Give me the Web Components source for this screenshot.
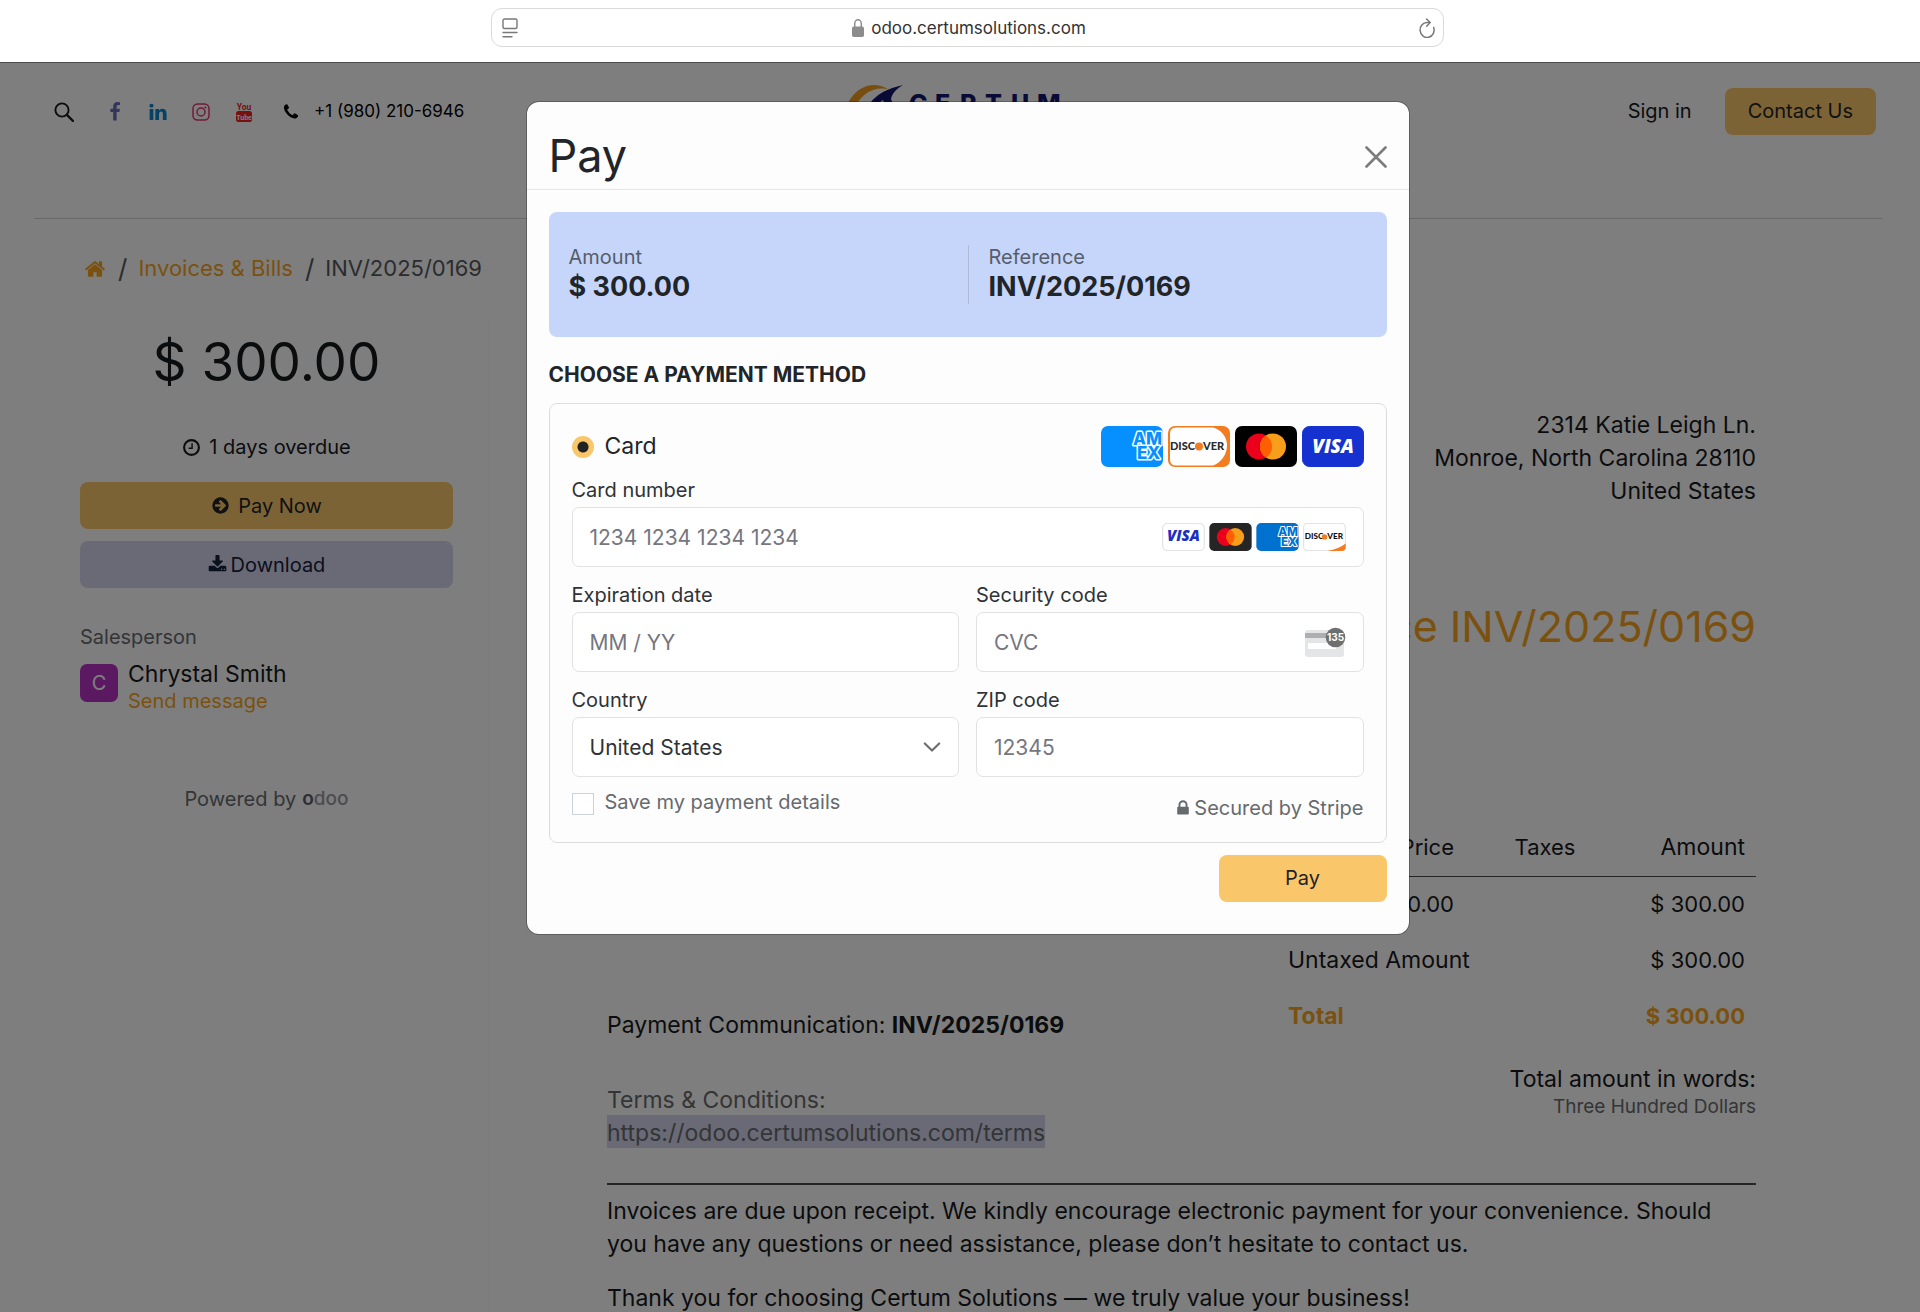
<!DOCTYPE html>
<html lang="en">
<head>
<meta charset="utf-8">
<meta name="viewport" content="width=device-width, initial-scale=1">
<title>INV/2025/0169</title>
<style>
html, body {
	height: 100%;
	margin: 0;
}

body {
	display: flex;
	flex-direction: column;
	overflow: hidden;
	background: #fdfdfd;
	color: #16191c;
	font-family: Inter, "Open Sans", sans-serif;
	font-size: 23px;
	line-height: 33px;
	--gold: #f9c76a;
	--link: #f5a31c;
	--muted: #666a6e;
}

.stage {
	position: relative;
	flex: 1;
	min-height: 0;
	overflow: hidden;
	border-top: 1px solid #4c4c4c;
}

.columns {
	display: grid;
	grid-template-columns: 489px minmax(0, 1fr);
}
</style>
</head>
<body>

<browser-bar></browser-bar>

<div class="stage">
	<site-header></site-header>
	<bread-crumbs></bread-crumbs>
	<div class="columns">
		<invoice-sidebar></invoice-sidebar>
		<invoice-document></invoice-document>
	</div>
	<payment-dialog></payment-dialog>
</div>

<script>
// ---------- icons ----------

const ICONS = {
	facebook: ['0 0 1792 1792', '<path fill="currentColor" d="M1343 12v264h-157q-86 0-116 36t-30 108v189h293l-39 296h-254v759H734V905H479V609h255V391q0-186 104-288.500T1115 0q147 0 228 12z"/>'],
	linkedin: ['0 0 1792 1792', '<path fill="currentColor" d="M477 625v991H147V625h330zm21-306q1 73-50.500 122T312 490h-2q-82 0-132-49t-50-122q0-74 51.500-122.500T314 148t133 48.500T498 319zm1166 729v568h-329v-530q0-105-40.500-164.500T1168 862q-63 0-105.500 34.500T999 982q-11 30-11 81v553H659q2-399 2-647t-1-296l-1-48h329v144h-2q20-32 41-56t56.500-52 87-43.500T1285 602q171 0 275 113.500t104 332.500z"/>'],
	phone: ['0 0 1792 1792', '<path fill="currentColor" d="M1600 1240q0 27-10 70.500t-21 68.500q-21 50-122 106-94 51-186 51-27 0-53-3.500t-57.500-12.500-47-14.500T1048 1485t-49-18q-98-35-175-83-127-79-264-216T344 904q-48-77-83-175-3-9-18-49t-20.500-55.500-14.500-47-12.500-57.500-3.500-53q0-92 51-186 56-101 106-122 25-11 68.500-21t70.500-10q14 0 21 3 18 6 53 76 11 19 30 54t35 63.500 31 53.500q3 4 17.500 25t21.500 35.500 7 28.500q0 20-28.500 50t-62 55-62 53-28.500 46q0 9 5 22.500t8.500 20.500 14 24 11.500 19q76 137 174 235t235 174q2 1 19 11.500t24 14 20.500 8.500 22.500 5q18 0 46-28.500t53-62 55-62 50-28.500q14 0 28.500 7t35.500 21.500 25 17.500q25 15 53.500 31t63.500 35 54 30q70 35 76 53 3 7 3 21z"/>'],
	home: ['0 0 1792 1792', '<path fill="currentColor" d="M1472 992v480q0 26-19 45t-45 19h-384v-384H768v384H384q-26 0-45-19t-19-45V992q0-1 .5-3t.5-3l575-474 575 474q1 2 1 6zm223-69l-62 74q-8 9-21 11h-3q-13 0-21-7L896 424l-692 577q-12 8-24 7-13-2-21-11l-62-74q-8-10-7-23.500T101 878l719-599q32-26 76-26t76 26l244 204V288q0-14 9-23t23-9h192q14 0 23 9t9 23v408l219 182q10 8 11 21.500t-7 23.500z"/>'],
	arrow: ['0 0 1792 1792', '<path fill="currentColor" d="M1413 896q0-27-18-45l-91-91-362-362q-18-18-45-18t-45 18l-91 91q-18 18-18 45t18 45l189 189H448q-26 0-45 19t-19 45v128q0 26 19 45t45 19h502l-189 189q-19 19-19 45t19 45l91 91q18 18 45 18t45-18l362-362 91-91q18-18 18-45zm251 0q0 209-103 385.500T1281.500 1561 896 1664t-385.500-103T231 1281.500 128 896t103-385.500T510.500 231 896 128t385.500 103T1561 510.500 1664 896z" fill-rule="evenodd"/>'],
	download: ['0 0 1792 1792', '<path fill="currentColor" d="M1344 1344q0-26-19-45t-45-19-45 19-19 45 19 45 45 19 45-19 19-45zm256 0q0-26-19-45t-45-19-45 19-19 45 19 45 45 19 45-19 19-45zm128-224v320q0 40-28 68t-68 28H160q-40 0-68-28t-28-68v-320q0-40 28-68t68-28h465l135 136q58 56 136 56t136-56l136-136h464q40 0 68 28t28 68zm-325-569q17 41-14 70l-448 448q-18 19-45 19t-45-19L403 621q-31-29-14-70 17-39 59-39h256V64q0-26 19-45t45-19h256q26 0 45 19t19 45v448h256q42 0 59 39z"/>'],
	lock: ['0 0 1792 1792', '<path fill="currentColor" d="M640 768h512V576q0-106-75-181t-181-75-181 75-75 181v192zm832 96v576q0 40-28 68t-68 28H416q-40 0-68-28t-28-68V864q0-40 28-68t68-28h32V576q0-184 132-316t316-132 316 132 132 316v192h32q40 0 68 28t28 68z"/>'],
	clock: ['0 0 20 20', '<circle cx="10" cy="10" r="7.800" fill="none" stroke="currentColor" stroke-width="2.200"/><path d="M10.600 5.500v5.200H7" fill="none" stroke="currentColor" stroke-width="1.500"/>'],
	search: ['0 0 20 20', '<circle cx="8" cy="8" r="6.600" fill="none" stroke="currentColor" stroke-width="1.900"/><path d="M12.900 12.900l6 6" stroke="currentColor" stroke-width="2.200" stroke-linecap="round"/>'],
	instagram: ['0 0 20 20', '<g fill="none" stroke="currentColor" stroke-width="1.500"><rect x="2" y="2" width="16" height="16" rx="4.500"/><circle cx="10" cy="10" r="4"/></g><circle cx="14.400" cy="5.500" r="1.100" fill="currentColor"/>'],
	youtube: ['0 0 20 20', '<g font-family="Roboto, sans-serif" font-weight="700" text-anchor="middle"><text x="10" y="7.500" font-size="8.500" fill="currentColor">You</text><rect x="2" y="9" width="16" height="11" rx="2.500" fill="currentColor"/><text x="10" y="17.500" font-size="7" fill="#fff">Tube</text></g>'],
	reader: ['0 0 20 20', '<g fill="none" stroke="currentColor" stroke-width="1.400" stroke-linecap="round"><rect x="3" y="1" width="14" height="9.500" rx="1.500"/><path d="M3 14.500h14M3 18.800h9"/></g>'],
	padlock: ['0 0 14 20', '<rect x="1" y="8.500" width="12" height="10.500" rx="1.800" fill="currentColor"/><path d="M3.700 9V5.600a3.300 3.800 0 0 1 6.600 0V9" fill="none" stroke="currentColor" stroke-width="1.500"/>'],
	reload: ['0 0 20 20', '<g fill="none" stroke="currentColor" stroke-width="1.500" stroke-linecap="round" stroke-linejoin="round"><path d="M16.700 9.500a7 7.500 0 1 1-6.700-5h2.500"/><path d="M9.500 1l3.700 3.500-3.500 3.700"/></g>'],
	close: ['0 0 22 22', '<path d="M1.500 1.500l19 19M20.500 1.500l-19 19" stroke="currentColor" stroke-width="2.600" stroke-linecap="round"/>'],
	chevron: ['0 0 18 18', '<path d="M1.800 5.500L9 12.500l7.200-7" fill="none" stroke="currentColor" stroke-width="2.200" stroke-linecap="round" stroke-linejoin="round"/>'],
	cvc: ['0 0 42 32', '<rect x="1" y="4" width="39" height="27" rx="3" fill="#e4e5e6"/><rect x="1" y="7" width="39" height="5" fill="#aeafb0"/><rect x="4" y="17" width="28" height="6" rx="1" fill="#fff"/><circle cx="31.500" cy="11.500" r="9.800" fill="#6e6f71"/><text x="31.500" y="15.300" font-family="Inter, sans-serif" font-size="10" font-weight="700" fill="#fff" text-anchor="middle">135</text>']
};

class AppIcon extends HTMLElement {
	constructor() {
		super();
		this.attachShadow({mode: 'open'});
	}

	connectedCallback() {
		const [box, shape] = ICONS[this.getAttribute('name')];
		this.shadowRoot.innerHTML = `
<style>
:host { display: inline-flex; flex: none; width: 20px; height: 20px; }
svg { width: 100%; height: 100%; display: block; }
</style>
<svg viewBox="${box}" aria-hidden="true">${shape}</svg>`;
	}
}
customElements.define('app-icon', AppIcon);


// ---------- card brands, both the large and the small set ----------

const visa = (bg, fg, line, size) => `<rect x=".5" y=".5" width="61" height="40" rx="7" fill="${bg}" stroke="${line}"/>
<text x="31" y="27" font-family="Open Sans, sans-serif" font-size="${size}" font-weight="800" font-style="italic" fill="${fg}" text-anchor="middle">VISA</text>`;

const mastercard = bg => `<rect width="62" height="41" rx="7" fill="${bg}"/>
<circle cx="24" cy="20.500" r="13" fill="#eb001b"/><circle cx="38" cy="20.500" r="13" fill="#f79e1b"/>
<path d="M31 9.500a13 13 0 0 1 0 22a13 13 0 0 1 0-22z" fill="#ff5f00"/>`;

const amex = bg => `<rect width="62" height="41" rx="7" fill="${bg}"/>
<text font-family="Inter, sans-serif" font-size="17" font-weight="800" fill="${bg}" stroke="#fff" stroke-width="3" stroke-linejoin="round" paint-order="stroke"><tspan x="32" y="19">AM</tspan><tspan x="36" y="33">EX</tspan></text>`;

const discover = (ink, size) => `<g font-family="Lato, sans-serif" font-size="${size}" font-weight="900" fill="${ink}"><text x="2" y="24">DISC</text><text x="35" y="24">VER</text></g>
<circle cx="31" cy="20.500" r="4" fill="#f47b20"/>`;

const BRANDS = {
	'amex': amex('#0690ff'),
	'amex-small': amex('#0071ce'),
	'visa': visa('#1531d0', '#fff', '#1531d0', 19),
	'visa-small': visa('#fff', '#1c2fc4', '#cfcfcf', 22),
	'mastercard': mastercard('#000'),
	'mastercard-small': mastercard('#252525'),
	'discover': `<rect width="62" height="41" rx="7" fill="#f47b20"/>
<path d="M8 1.500h37c8 2 14 9 14 18s-6 17-14 20H8q-6 0-6-6V7.500q0-6 6-6z" fill="#fff"/>${discover('#2b2b2b', 11)}`,
	'discover-small': `<rect x=".5" y=".5" width="61" height="40" rx="6" fill="#fff" stroke="#cfcfcf"/>
<path d="M35 41q17-3 27-11v5q0 6-6 6z" fill="#f47b20"/>${discover('#111', 12)}`
};

class CardBrand extends HTMLElement {
	constructor() {
		super();
		this.attachShadow({mode: 'open'});
	}

	connectedCallback() {
		const name = this.getAttribute('name');
		this.shadowRoot.innerHTML = `
<style>
:host { display: block; flex: none; width: 62px; height: 41px; }
:host([name$="small"]) { width: 43px; height: 28px; }
svg { width: 100%; height: 100%; display: block; }
</style>
<svg viewBox="0 0 62 41" role="img" aria-label="${name.split('-')[0]}">${BRANDS[name]}</svg>`;
	}
}
customElements.define('card-brand', CardBrand);


// ---------- buttons ----------

class ActionButton extends HTMLElement {
	constructor() {
		super();
		this.attachShadow({mode: 'open'}).innerHTML = `
<style>
:host { display: block; }
button {
	display: flex;
	align-items: center;
	justify-content: center;
	gap: 8px;
	width: 100%;
	height: 47px;
	padding: 0 23px;
	border: none;
	border-radius: 8px;
	background: var(--gold);
	color: #1f2226;
	font: inherit;
	font-size: 20px;
	white-space: nowrap;
	cursor: pointer;
}
:host([tone="soft"]) button { background: #d2d4ea; color: #16203a; gap: 4px; }
</style>
<button type="button"><slot></slot></button>`;
	}
}
customElements.define('action-button', ActionButton);


// ---------- browser bar ----------

class BrowserBar extends HTMLElement {
	constructor() {
		super();
		this.attachShadow({mode: 'open'}).innerHTML = `
<style>
:host { display: flex; justify-content: center; padding: 8px 0 15px 15px; background: #fff; }
.address {
	display: flex;
	align-items: center;
	justify-content: space-between;
	box-sizing: border-box;
	width: 50%;
	height: 39px;
	padding: 1px 6px 0 8px;
	border: 1px solid #dadada;
	border-radius: 11px;
	color: #77787a;
}
.host { display: flex; align-items: center; gap: 6px; color: #333; font-size: 17px; }
.host app-icon { width: 14px; color: #8c8c8c; }
</style>
<div class="address">
	<app-icon name="reader"></app-icon>
	<span class="host"><app-icon name="padlock"></app-icon>odoo.certumsolutions.com</span>
	<app-icon name="reload"></app-icon>
</div>`;
	}
}
customElements.define('browser-bar', BrowserBar);


// ---------- site header ----------

class SiteHeader extends HTMLElement {
	constructor() {
		super();
		this.attachShadow({mode: 'open'}).innerHTML = `
<style>
:host {
	display: grid;
	grid-template-columns: 1fr auto 1fr;
	align-items: start;
	box-sizing: border-box;
	height: 156px;
	margin: 0 38px 0 34px;
	border-bottom: 1px solid #cfd0d2;
}
a { color: inherit; text-decoration: none; }
nav { display: flex; align-items: center; height: 47px; margin-top: 25px; }
.left { gap: 23px; padding-left: 20px; }
.left a { display: flex; }
.search { margin-right: 8px; }
.phone { align-items: center; gap: 14px; margin-left: 5px; font-size: 17px; color: #000; }
.phone app-icon { width: 18px; height: 18px; }
.right { justify-content: flex-end; gap: 33px; padding-right: 6px; font-size: 20px; }
.logo { margin-top: 21px; width: 226px; height: 90px; }
</style>
<nav class="left">
	<a class="search" href="#search" aria-label="Search"><app-icon name="search"></app-icon></a>
	<a href="#facebook" aria-label="Facebook" style="color:#6a6cb8"><app-icon name="facebook"></app-icon></a>
	<a href="#linkedin" aria-label="LinkedIn" style="color:#0a86c9"><app-icon name="linkedin"></app-icon></a>
	<a href="#instagram" aria-label="Instagram" style="color:#e2356b"><app-icon name="instagram"></app-icon></a>
	<a href="#youtube" aria-label="YouTube" style="color:#f0201c"><app-icon name="youtube"></app-icon></a>
	<a class="phone" href="tel:+19802106946"><app-icon name="phone"></app-icon>+1 (980) 210-6946</a>
</nav>
<svg class="logo" viewBox="0 0 226 90" role="img" aria-label="Certum">
	<path d="M0 26C6 7 24-6 43 5c-15-3-28 5-34 21z" fill="#ee9d1f"/>
	<path d="M20 28C27 13 37 6 58 1c-8 5-11 9-12 14l6 15h-9l-5-14q-7 4-10 14z" fill="#14146e"/>
	<text x="64 90 115 140 166 192" y="28" font-family="Inter, sans-serif" font-size="25" font-weight="800" fill="#14146e">CERTUM</text>
</svg>
<nav class="right">
	<a href="#login">Sign in</a>
	<action-button>Contact Us</action-button>
</nav>`;
	}
}
customElements.define('site-header', SiteHeader);


// ---------- breadcrumbs ----------

class BreadCrumbs extends HTMLElement {
	constructor() {
		super();
		this.attachShadow({mode: 'open'}).innerHTML = `
<style>
:host { display: block; padding: 33px 84px 32px; font-size: 22px; }
ol { display: flex; align-items: center; gap: 12px; margin: 0; padding: 0; list-style: none; color: #55595d; }
li { display: flex; gap: 11px; align-items: center; }
li + li::before { content: "/"; font-size: 26px; }
a { display: flex; color: var(--link); text-decoration: none; }
app-icon { width: 22px; height: 22px; }
</style>
<ol>
	<li><a href="#home" aria-label="Home"><app-icon name="home"></app-icon></a></li>
	<li><a href="#invoices">Invoices &amp; Bills</a></li>
	<li>INV/2025/0169</li>
</ol>`;
	}
}
customElements.define('bread-crumbs', BreadCrumbs);


// ---------- sidebar ----------

class InvoiceSidebar extends HTMLElement {
	constructor() {
		super();
		this.attachShadow({mode: 'open'}).innerHTML = `
<style>
:host { display: block; padding: 11px 35px 0 80px; border-right: 1px solid #f8f8f8; font-size: 20px; line-height: 30px; }
h2 { margin: 0 0 36px; font-size: 53px; line-height: 68px; font-weight: 400; text-align: center; }
.due { display: flex; align-items: center; justify-content: center; gap: 8px; margin-bottom: 20px; }
action-button + action-button { margin-top: 12px; }
app-icon { width: 19px; height: 19px; }
h3 { margin: 34px 0 9px; font: inherit; color: var(--muted); }
.person { display: flex; gap: 10px; line-height: 27px; }
.avatar {
	display: flex;
	align-items: center;
	justify-content: center;
	width: 38px;
	height: 38px;
	margin-top: 3px;
	border-radius: 7px;
	background: #b533c0;
	color: #fff;
}
.name { font-size: 23px; }
.person a { color: var(--link); text-decoration: none; }
.powered { display: flex; justify-content: center; gap: 6px; margin-top: 69px; color: var(--muted); }
.odoo { color: #98989e; font-size: 19px; font-weight: 500; }
.odoo b { color: #5b5b66; font-weight: 600; }
</style>
<h2>$ 300.00</h2>
<div class="due"><app-icon name="clock"></app-icon>1 days overdue</div>
<action-button><app-icon name="arrow"></app-icon>Pay Now</action-button>
<action-button tone="soft"><app-icon name="download"></app-icon>Download</action-button>
<h3>Salesperson</h3>
<div class="person">
	<span class="avatar">C</span>
	<div>
		<div class="name">Chrystal Smith</div>
		<a href="#message">Send message</a>
	</div>
</div>
<div class="powered">Powered by <span class="odoo"><b>o</b>doo</span></div>`;
	}
}
customElements.define('invoice-sidebar', InvoiceSidebar);


// ---------- invoice ----------

class InvoiceDocument extends HTMLElement {
	constructor() {
		super();
		this.attachShadow({mode: 'open'}).innerHTML = `
<style>
:host { display: block; padding: 92px 164px 0 118px; }
address { font-style: normal; text-align: right; }
h1 { margin: 88px 0 164px; font-size: 43px; line-height: 60px; font-weight: 400; text-align: right; color: var(--link); }
table { width: 100%; border-collapse: collapse; font-size: 22px; }
th, td { height: 56px; padding: 0 11px; box-sizing: border-box; font-weight: 400; text-align: right; }
.lines { table-layout: fixed; }
.lines thead th { height: 56px; border-bottom: 1px solid #4a4a4a; }
.lines .taxes { width: 160px; text-align: center; }
.lines .amount { width: 131px; }
.lines th.amount { font-size: 23px; }
.below { display: grid; grid-template-columns: 1fr 468px; }
.totals th { padding-left: 0; text-align: left; font-size: 23px; }
.totals .total > * { color: var(--link); font-weight: 700; }
.words { margin: 19px 0 0; text-align: right; }
.words small { display: block; color: var(--muted); font-size: 19px; line-height: 22px; }
p { margin: 0; }
.reference { margin-top: 77px; }
.terms { margin-top: 42px; color: var(--muted); }
.terms a { background: #d2d4ea; padding: 4px 0 1px; color: inherit; text-decoration: none; }
hr { margin: 33px 0 10px; border: none; border-top: 2px solid #4a4a4a; }
hr ~ p + p { margin-top: 21px; }
</style>
<address>2314 Katie Leigh Ln.<br>Monroe, North Carolina 28110<br>United States</address>
<h1>Invoice INV/2025/0169</h1>
<table class="lines">
	<thead><tr><th>Price</th><th class="taxes">Taxes</th><th class="amount">Amount</th></tr></thead>
	<tbody><tr><td>$ 300.00</td><td></td><td>$ 300.00</td></tr></tbody>
</table>
<div class="below">
	<div>
		<p class="reference">Payment Communication: <b>INV/2025/0169</b></p>
		<p class="terms">Terms &amp; Conditions:<br><a href="https://odoo.certumsolutions.com/terms">https://odoo.certumsolutions.com/terms</a></p>
	</div>
	<div>
		<table class="totals">
			<tr><th>Untaxed Amount</th><td>$ 300.00</td></tr>
			<tr class="total"><th>Total</th><td>$ 300.00</td></tr>
		</table>
		<p class="words">Total amount in words:<small>Three Hundred Dollars</small></p>
	</div>
</div>
<hr>
<p>Invoices are due upon receipt. We kindly encourage electronic payment for your convenience. Should you have any questions or need assistance, please don’t hesitate to contact us.</p>
<p>Thank you for choosing Certum Solutions — we truly value your business!</p>`;
	}
}
customElements.define('invoice-document', InvoiceDocument);


// ---------- form field: label, text box, and whatever is slotted at its right ----------

const FIELD_STYLE = `
<style>
:host { display: block; min-width: 0; font-family: Inter, sans-serif; }
label { display: block; margin-bottom: 5px; color: #303235; font-size: 20px; line-height: 24px; }
.box {
	display: flex;
	align-items: center;
	gap: 4px;
	box-sizing: border-box;
	height: 60px;
	padding: 0 17px;
	border: 1px solid #e2e2e2;
	border-radius: 7px;
	background: #fff;
	color: #6d6e70;
}
input, select {
	flex: 1;
	min-width: 0;
	padding: 0;
	border: none;
	outline: none;
	appearance: none;
	background: none;
	color: #303235;
	font: inherit;
	font-size: 21px;
}
input::placeholder { color: #757680; opacity: 1; }
app-icon { width: 18px; height: 18px; }
</style>`;

class TextField extends HTMLElement {
	constructor() {
		super();
		this.attachShadow({mode: 'open'});
	}

	connectedCallback() {
		this.shadowRoot.innerHTML = `${FIELD_STYLE}
<label for="field">${this.getAttribute('label')}</label>
<div class="box">
	<input id="field" type="text" placeholder="${this.getAttribute('placeholder')}">
	<slot></slot>
</div>`;
	}
}
customElements.define('text-field', TextField);

class SelectField extends HTMLElement {
	constructor() {
		super();
		this.attachShadow({mode: 'open'});
	}

	connectedCallback() {
		this.shadowRoot.innerHTML = `${FIELD_STYLE}
<label for="field">${this.getAttribute('label')}</label>
<div class="box">
	<select id="field"><option>${this.getAttribute('value')}</option></select>
	<app-icon name="chevron"></app-icon>
</div>`;
	}
}
customElements.define('select-field', SelectField);


// ---------- payment dialog ----------

class PaymentDialog extends HTMLElement {
	constructor() {
		super();
		this.attachShadow({mode: 'open'}).innerHTML = `
<style>
:host {
	position: absolute;
	inset: 0;
	display: flex;
	align-items: flex-start;
	justify-content: center;
	padding: 39px 0 0 15px;
	background: rgba(0, 0, 0, .5);
}
.dialog {
	width: 882px;
	border-radius: 12px;
	background: #fdfdfd;
	box-shadow: 0 0 0 1px rgba(0, 0, 0, .25);
	color: #212529;
}
header {
	display: flex;
	align-items: center;
	justify-content: space-between;
	height: 87px;
	padding: 0 22px;
	border-bottom: 1px solid #e4e5e6;
}
h4 { margin: 20px 0 0; font-size: 45px; line-height: 60px; font-weight: 400; }
.close { display: flex; margin-top: 22px; padding: 0; border: none; background: none; color: #7b7c7d; cursor: pointer; }
.close app-icon { width: 22px; height: 22px; }
.body { padding: 22px 22px 32px; }
.summary { display: grid; grid-template-columns: 1fr 1fr; padding: 33px 0; border-radius: 8px; background: #c6d6fb; }
.summary div { padding: 0 20px; font-size: 27px; line-height: 35px; font-weight: 700; }
.summary div + div { border-left: 1px solid #adb9d6; }
.summary span { display: block; color: #555d6b; font-size: 20px; line-height: 24px; font-weight: 400; }
h5 { margin: 24px 0 14px; font-size: 21px; line-height: 28px; font-weight: 700; }
.method { padding: 22px 22px 19px; border: 1px solid #dcdddf; border-radius: 8px; }
.row { display: flex; justify-content: space-between; }
.pick { display: flex; align-items: center; gap: 11px; height: 41px; }
.pick input {
	appearance: none;
	width: 22px;
	height: 22px;
	margin: 0;
	border-radius: 50%;
	background: radial-gradient(circle, #222 0 5px, var(--gold) 6px);
}
.brands { display: flex; gap: 5px; }
.fields { display: grid; grid-template-columns: 1fr 1fr; gap: 16px 17px; margin-top: 11px; }
.wide { grid-column: 1 / -1; }
.cvc { width: 42px; height: 32px; }
.foot { margin-top: 10px; color: var(--muted); font-size: 20px; line-height: 30px; }
.foot label { display: flex; gap: 11px; }
.foot input {
	appearance: none;
	box-sizing: border-box;
	width: 22px;
	height: 22px;
	margin: 6px 0 0;
	border: 1px solid #ccd2da;
	background: #fff;
}
.secured { display: flex; align-items: center; gap: 2px; margin-top: 6px; }
.secured app-icon { width: 18px; height: 18px; }
.submit { width: 168px; margin: 12px 0 0 auto; }
</style>
<section class="dialog" role="dialog" aria-labelledby="title">
	<header>
		<h4 id="title">Pay</h4>
		<button class="close" type="button" aria-label="Close"><app-icon name="close"></app-icon></button>
	</header>
	<div class="body">
		<div class="summary">
			<div><span>Amount</span>$ 300.00</div>
			<div><span>Reference</span>INV/2025/0169</div>
		</div>
		<h5>CHOOSE A PAYMENT METHOD</h5>
		<div class="method">
			<div class="row">
				<label class="pick"><input type="radio" name="method" checked>Card</label>
				<div class="brands">
					<card-brand name="amex"></card-brand>
					<card-brand name="discover"></card-brand>
					<card-brand name="mastercard"></card-brand>
					<card-brand name="visa"></card-brand>
				</div>
			</div>
			<div class="fields">
				<text-field class="wide" label="Card number" placeholder="1234 1234 1234 1234">
					<card-brand name="visa-small"></card-brand>
					<card-brand name="mastercard-small"></card-brand>
					<card-brand name="amex-small"></card-brand>
					<card-brand name="discover-small"></card-brand>
				</text-field>
				<text-field label="Expiration date" placeholder="MM / YY"></text-field>
				<text-field label="Security code" placeholder="CVC"><app-icon class="cvc" name="cvc"></app-icon></text-field>
				<select-field label="Country" value="United States"></select-field>
				<text-field label="ZIP code" placeholder="12345"></text-field>
			</div>
			<div class="row foot">
				<label><input type="checkbox">Save my payment details</label>
				<span class="secured"><app-icon name="lock"></app-icon>Secured by Stripe</span>
			</div>
		</div>
		<action-button class="submit">Pay</action-button>
	</div>
</section>`;
	}

	connectedCallback() {
		this.shadowRoot.querySelector('.close').addEventListener('click', () => this.remove());
	}
}
customElements.define('payment-dialog', PaymentDialog);
</script>
</body>
</html>
